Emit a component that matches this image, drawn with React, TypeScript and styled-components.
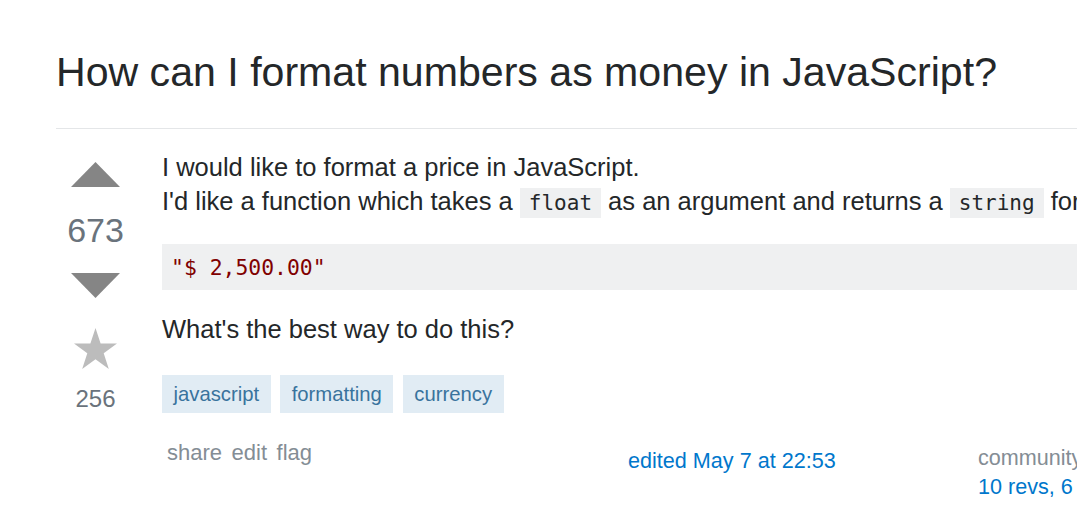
import * as React from 'react'

import styled, { createGlobalStyle } from 'styled-components'

const COLOR = {
  TEXT: '#242729',
  MUTED: '#6a737c',
  LIGHT: '#848d95',
  ARROW: '#858585',
  STAR: '#bcbcbc',
  LINK: '#0077cc',
  TAG_BG: '#e1ecf4',
  TAG_TEXT: '#39739d',
  CODE_BG: '#eff0f1',
  BORDER: '#e4e6e8',
}

const tags = ['javascript', 'formatting', 'currency']

const App: React.FC = () => (
  <Page>
    <GlobalStyle />
    <Header>
      <Title>How can I format numbers as money in JavaScript?</Title>
    </Header>
    <PostRow>
      <VoteCell>
        <svg width="49" height="25" viewBox="0 0 49 25">
          <polygon points="0,25 49,25 24.5,0" fill={COLOR.ARROW} />
        </svg>
        <VoteCount>673</VoteCount>
        <svg width="49" height="25" viewBox="0 0 49 25">
          <polygon points="0,0 49,0 24.5,25" fill={COLOR.ARROW} />
        </svg>
        <StarIcon width="43" height="41" viewBox="0 0 43 41">
          <polygon
            points="21.5,0 26.6,15.6 43,15.6 29.7,25.3 34.8,40.9 21.5,31.2 8.2,40.9 13.3,25.3 0,15.6 16.4,15.6"
            fill={COLOR.STAR}
          />
        </StarIcon>
        <FavCount>256</FavCount>
      </VoteCell>
      <PostCell>
        <Paragraph>
          I would like to format a price in JavaScript.
          <br />
          I'd like a function which takes a <InlineCode>float</InlineCode> as an argument and
          returns a <InlineCode>string</InlineCode> formatted like this:
        </Paragraph>
        <Pre>"$ 2,500.00"</Pre>
        <Paragraph>What's the best way to do this?</Paragraph>
        <TagList>
          {tags.map((tag) => (
            <Tag key={tag}>{tag}</Tag>
          ))}
        </TagList>
        <Footer>
          <Menu>
            <MenuLink>share</MenuLink>
            <MenuLink>edit</MenuLink>
            <MenuLink>flag</MenuLink>
          </Menu>
          <EditedSig>edited May 7 at 22:53</EditedSig>
          <OwnerSig>
            <OwnerName>community wiki</OwnerName>
            <Revs>10 revs, 6 users 45%</Revs>
          </OwnerSig>
        </Footer>
      </PostCell>
    </PostRow>
  </Page>
)

export default App

const GlobalStyle = createGlobalStyle`
  html, body {
    margin: 0;
    padding: 0;
    background: #fff;
    overflow: hidden;
  }
  body {
    font-family: "Liberation Sans", Arial, sans-serif;
    color: ${COLOR.TEXT};
  }
`

const Page = styled.div`
  width: 1500px;
  padding-left: 56px;
`

const Header = styled.div`
  padding-top: 46px;
  padding-bottom: 29px;
  border-bottom: 1px solid ${COLOR.BORDER};
`

const Title = styled.h1`
  margin: 0;
  font-size: 41.1px;
  line-height: 53px;
  font-weight: normal;
  color: ${COLOR.TEXT};
  white-space: nowrap;
`

const PostRow = styled.div`
  display: flex;
  padding-top: 21px;
`

const VoteCell = styled.div`
  width: 79px;
  flex: 0 0 79px;
  display: flex;
  flex-direction: column;
  align-items: center;
  padding-top: 12px;
  padding-right: 27px;

  svg {
    display: block;
  }
`

const VoteCount = styled.div`
  font-size: 34px;
  line-height: 40px;
  color: ${COLOR.MUTED};
  margin: 23px 0 23px;
`

const StarIcon = styled.svg`
  margin-top: 30px;
`

const FavCount = styled.div`
  font-size: 24px;
  line-height: 28px;
  color: ${COLOR.MUTED};
  margin-top: 16px;
`

const PostCell = styled.div`
  width: 1200px;
  font-size: 25.5px;
  line-height: 34px;
`

const Paragraph = styled.p`
  margin: 0 0 26px;
`

const InlineCode = styled.code`
  font-family: "DejaVu Sans Mono", "Liberation Mono", monospace;
  font-size: 21px;
  line-height: 1;
  background: ${COLOR.CODE_BG};
  padding: 3px 9px;
`

const Pre = styled.pre`
  margin: 0 0 22px;
  padding: 8.5px 8.5px 8.5px 9px;
  background: ${COLOR.CODE_BG};
  font-family: "DejaVu Sans Mono", "Liberation Mono", monospace;
  font-size: 21.4px;
  line-height: 29px;
  color: #800000;
`

const TagList = styled.div`
  display: flex;
  gap: 9.5px;
  margin-top: 29px;
`

const Tag = styled.a`
  display: block;
  height: 38px;
  line-height: 38px;
  padding: 0 11.5px;
  font-size: 20.3px;
  background: ${COLOR.TAG_BG};
  color: ${COLOR.TAG_TEXT};
`

const Footer = styled.div`
  display: flex;
  align-items: flex-start;
  margin-top: 26px;
  font-size: 22px;
  line-height: 28px;
`

const Menu = styled.div`
  display: flex;
  gap: 9.5px;
  flex: 0 0 455px;
  padding-left: 5px;
  box-sizing: border-box;
`

const MenuLink = styled.a`
  color: ${COLOR.LIGHT};
`

const EditedSig = styled.div`
  flex: 0 0 351px;
  box-sizing: border-box;
  padding: 8px 0 0 11px;
  color: ${COLOR.LINK};
  font-size: 21.6px;
`

const OwnerSig = styled.div`
  padding: 4px 0 0 10px;
  font-size: 21.6px;
  white-space: nowrap;
`

const OwnerName = styled.div`
  color: ${COLOR.LIGHT};
  line-height: 29px;
`

const Revs = styled.div`
  color: ${COLOR.LINK};
  line-height: 29px;
`
